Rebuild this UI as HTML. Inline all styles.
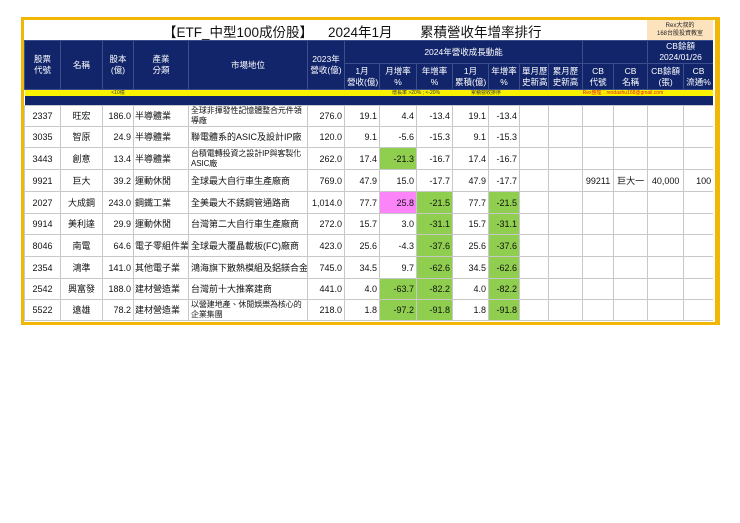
<!DOCTYPE html>
<html><head><meta charset="utf-8"><style>
body{margin:0;width:740px;height:523px;background:#fff;position:relative;font-family:"Liberation Sans","Noto Sans CJK TC",sans-serif;overflow:hidden}
.frame{position:absolute;left:21px;top:17px;width:691px;height:302px;border:3px solid #f2b705;border-right-width:5px}
.title{position:absolute;left:24px;top:20px;width:689px;height:20px;background:#fff}
.title span{position:absolute;top:1px;font-size:13.5px;color:#111;white-space:nowrap}
.rex{position:absolute;left:647px;top:20px;width:66px;height:20px;background:#fde3bd;font-size:6px;line-height:8px;text-align:center;color:#222;padding-top:2px;box-sizing:border-box}
.tw{position:absolute;left:24px;top:40px;width:689px;height:282px;overflow:hidden}
table{border-collapse:collapse;table-layout:fixed;width:689px}
td{padding:0 2px;font-size:9px;line-height:10px;overflow:hidden;white-space:nowrap;border:1px solid #c8c8c8;color:#111}
.h td{background:#12256b;color:#fff;text-align:center;border-color:#3c4f8c;line-height:11px;font-size:8.5px}
.y td{background:#fbf200;height:6px;font-size:5px;line-height:6px;color:#333;border:none;padding:0}
.n td{background:#12256b;height:9px;border:none;padding:0}
.r{text-align:right}.c{text-align:center}
.g{background:#8fce4e}.p{background:#fb84f8}
.d td.w{white-space:normal;line-height:10px;font-size:8px;letter-spacing:-0.1px}
.d td.s{padding:0 0 0 1px}
</style></head><body>
<div class="frame"></div>
<div class="title">
<span style="left:139px">【ETF_中型100成份股】</span>
<span style="left:304px">2024年1月</span>
<span style="left:396px">累積營收年增率排行</span>
</div>
<div class="rex">Rex大叔的<br>168台股投資教室</div>
<div class="tw">
<table>
<colgroup><col style="width:36px"><col style="width:42px"><col style="width:31px"><col style="width:55px"><col style="width:119px"><col style="width:37px"><col style="width:35px"><col style="width:37px"><col style="width:36px"><col style="width:36px"><col style="width:31px"><col style="width:29px"><col style="width:34px"><col style="width:31px"><col style="width:34px"><col style="width:36px"><col style="width:30px"></colgroup>
<tr class="h" style="height:19px"><td rowspan="2">股票<br>代號</td><td rowspan="2">名稱</td><td rowspan="2">股本<br>(億)</td><td rowspan="2">產業<br>分類</td><td rowspan="2">市場地位</td><td rowspan="2">2023年<br>營收(億)</td><td colspan="7">2024年營收成長動能</td><td colspan="2"></td><td colspan="2">CB餘額<br>2024/01/26</td></tr>
<tr class="h" style="height:26px"><td>1月<br>營收(億)</td><td>月增率<br>%</td><td>年增率<br>%</td><td>1月<br>累積(億)</td><td>年增率<br>%</td><td>單月歷<br>史新高</td><td>累月歷<br>史新高</td><td>CB<br>代號</td><td>CB<br>名稱</td><td>CB餘額<br>(張)</td><td>CB<br>流通%</td></tr>
<tr class="y"><td></td><td></td><td class="c">&lt;10億</td><td></td><td></td><td></td><td></td><td colspan="2" class="c">增長率 &gt;20% ; &lt;-20%</td><td colspan="2" class="c">累積營收排序</td><td></td><td></td><td colspan="4" style="color:#e02020">Rex整理：rexdashu168@gmail.com</td></tr>
<tr class="n"><td colspan="17"></td></tr>
<tr class="d" style="height:21px"><td class="c">2337</td><td class="c">旺宏</td><td class="r">186.0</td><td class="s">半導體業</td><td class="w">全球非揮發性記憶體整合元件領導廠</td><td class="r">276.0</td><td class="r">19.1</td><td class="r">4.4</td><td class="r">-13.4</td><td class="r">19.1</td><td class="r">-13.4</td><td></td><td></td><td></td><td></td><td></td><td></td></tr>
<tr class="d" style="height:21px"><td class="c">3035</td><td class="c">智原</td><td class="r">24.9</td><td class="s">半導體業</td><td>聯電體系的ASIC及設計IP廠</td><td class="r">120.0</td><td class="r">9.1</td><td class="r">-5.6</td><td class="r">-15.3</td><td class="r">9.1</td><td class="r">-15.3</td><td></td><td></td><td></td><td></td><td></td><td></td></tr>
<tr class="d" style="height:22px"><td class="c">3443</td><td class="c">創意</td><td class="r">13.4</td><td class="s">半導體業</td><td class="w">台積電轉投資之設計IP與客製化ASIC廠</td><td class="r">262.0</td><td class="r">17.4</td><td class="r g">-21.3</td><td class="r">-16.7</td><td class="r">17.4</td><td class="r">-16.7</td><td></td><td></td><td></td><td></td><td></td><td></td></tr>
<tr class="d" style="height:22px"><td class="c">9921</td><td class="c">巨大</td><td class="r">39.2</td><td class="s">運動休閒</td><td>全球最大自行車生產廠商</td><td class="r">769.0</td><td class="r">47.9</td><td class="r">15.0</td><td class="r">-17.7</td><td class="r">47.9</td><td class="r">-17.7</td><td></td><td></td><td class="c">99211</td><td class="c">巨大一</td><td class="c">40,000</td><td class="r">100</td></tr>
<tr class="d" style="height:22px"><td class="c">2027</td><td class="c">大成鋼</td><td class="r">243.0</td><td class="s">鋼鐵工業</td><td>全美最大不銹鋼管通路商</td><td class="r">1,014.0</td><td class="r">77.7</td><td class="r p">25.8</td><td class="r g">-21.5</td><td class="r">77.7</td><td class="r g">-21.5</td><td></td><td></td><td></td><td></td><td></td><td></td></tr>
<tr class="d" style="height:21px"><td class="c">9914</td><td class="c">美利達</td><td class="r">29.9</td><td class="s">運動休閒</td><td>台灣第二大自行車生產廠商</td><td class="r">272.0</td><td class="r">15.7</td><td class="r">3.0</td><td class="r g">-31.1</td><td class="r">15.7</td><td class="r g">-31.1</td><td></td><td></td><td></td><td></td><td></td><td></td></tr>
<tr class="d" style="height:22px"><td class="c">8046</td><td class="c">南電</td><td class="r">64.6</td><td class="s">電子零組件業</td><td>全球最大覆晶載板(FC)廠商</td><td class="r">423.0</td><td class="r">25.6</td><td class="r">-4.3</td><td class="r g">-37.6</td><td class="r">25.6</td><td class="r g">-37.6</td><td></td><td></td><td></td><td></td><td></td><td></td></tr>
<tr class="d" style="height:22px"><td class="c">2354</td><td class="c">鴻準</td><td class="r">141.0</td><td class="s">其他電子業</td><td>鴻海旗下散熱模組及鋁鎂合金廠</td><td class="r">745.0</td><td class="r">34.5</td><td class="r">9.7</td><td class="r g">-62.6</td><td class="r">34.5</td><td class="r g">-62.6</td><td></td><td></td><td></td><td></td><td></td><td></td></tr>
<tr class="d" style="height:21px"><td class="c">2542</td><td class="c">興富發</td><td class="r">188.0</td><td class="s">建材營造業</td><td>台灣前十大推案建商</td><td class="r">441.0</td><td class="r">4.0</td><td class="r g">-63.7</td><td class="r g">-82.2</td><td class="r">4.0</td><td class="r g">-82.2</td><td></td><td></td><td></td><td></td><td></td><td></td></tr>
<tr class="d" style="height:21px"><td class="c">5522</td><td class="c">遠雄</td><td class="r">78.2</td><td class="s">建材營造業</td><td class="w">以營建地產、休閒娛樂為核心的企業集團</td><td class="r">218.0</td><td class="r">1.8</td><td class="r g">-97.2</td><td class="r g">-91.8</td><td class="r">1.8</td><td class="r g">-91.8</td><td></td><td></td><td></td><td></td><td></td><td></td></tr>
</table>
</div>
</body></html>
